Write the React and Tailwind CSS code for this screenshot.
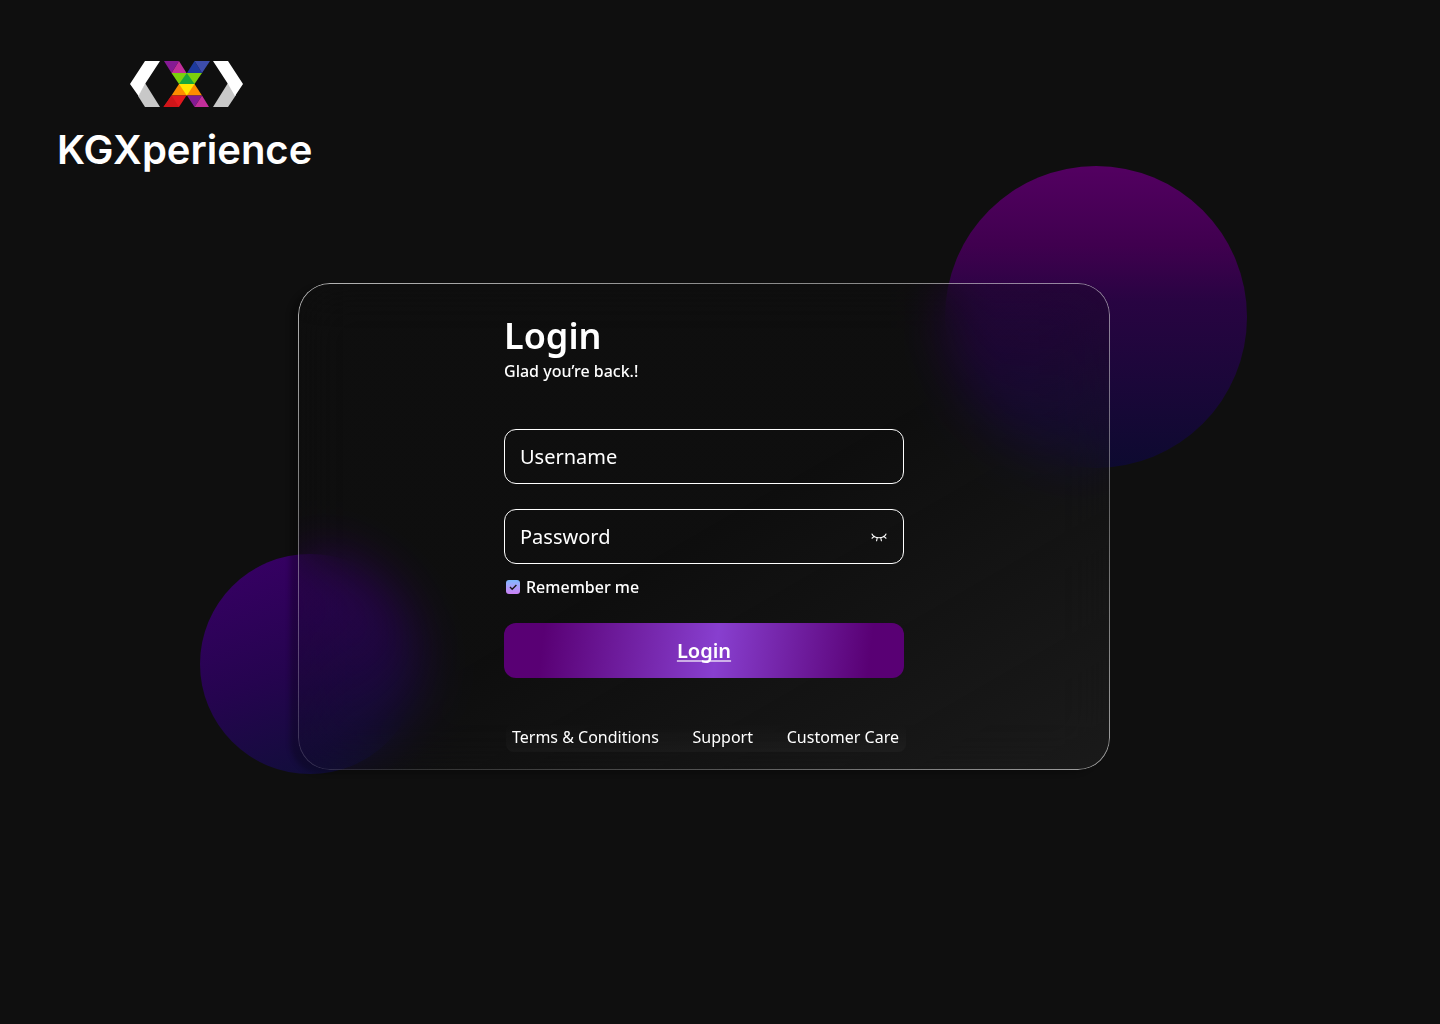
import { useState } from "react";

function Logo() {
  return (
    <svg width="113" height="46" viewBox="0 0 113 46" aria-hidden="true">
      <path d="M15 22L30 46H15L8 35Z" fill="#c8c8c8" />
      <path d="M15 0H30L15 23L8.500 35L0 23Z" fill="#fff" />
      <path d="M98 22L106 34L98 46H83Z" fill="#c8c8c8" />
      <path d="M83 0H98L113 23L105 35L98 23Z" fill="#fff" />
      <path d="M34 0H49L41.500 12Z" fill="#851a94" />
      <path d="M49 0L56.500 12H41.500Z" fill="#c22f9b" />
      <path d="M64.500 0L72 12H57Z" fill="#1d3a9e" />
      <path d="M64.500 0H80L72 12Z" fill="#3c4cab" />
      <path d="M41.500 12H72L64.500 23H49Z" fill="#7bd00d" />
      <path d="M56.800 12L64.500 23H49Z" fill="#17a63a" />
      <path d="M49 23H64.500L72 34.500H41.500Z" fill="#ff8c00" />
      <path d="M49 23H64.500L56.800 34.500Z" fill="#ffe600" />
      <path d="M41.500 34.500H56.500L49 46H33.500Z" fill="#e3191f" />
      <path d="M41.500 34.500L49 46H33.500Z" fill="#cf1519" />
      <path d="M57 34.500H72L64.500 46Z" fill="#851a94" />
      <path d="M72 34.500L79 46H64.500Z" fill="#c22f9b" />
    </svg>
  );
}

function ClosedEye() {
  return (
    <svg width="16" height="10" viewBox="0 0 16 10" fill="none" stroke="#fff" strokeWidth="1.1" strokeLinecap="round" aria-hidden="true">
      <path d="M1 2C3 7 13 7 15 2" />
      <path d="M3.200 4.400L1 6.200M12.800 4.400L15 6.200M6.200 5.800L5.600 8.800M9.800 5.800L10.400 8.800" />
    </svg>
  );
}

const field =
  "block h-[55px] w-full rounded-xl border border-white bg-transparent px-[15px] text-xl text-white placeholder:text-white outline-none focus:ring-1 focus:ring-white";

export default function App() {
  const [remember, setRemember] = useState(true);
  const [visible, setVisible] = useState(false);

  return (
    <div className="flex min-h-screen flex-col overflow-hidden bg-[#0f0f0f] font-['Noto_Sans',sans-serif] text-white">
      <header className="flex flex-col items-start px-[57px] pt-[61px]">
        <div className="flex flex-col items-center">
          <div className="pl-1">
            <Logo />
          </div>
          <span className="mt-[18px] font-['Inter',sans-serif] text-[40px] leading-[50px] font-semibold">KGXperience</span>
        </div>
      </header>

      <main className="flex justify-center pt-[108px] pr-8">
        <div className="relative w-full max-w-[812px]">
          <div className="absolute -top-[117px] -right-[137px] size-[302px] rounded-full bg-[linear-gradient(180deg,#530061_0%,#40004f_26%,#280442_45%,#0d0a30_100%)]" />
          <div className="absolute -bottom-1 -left-[98px] size-[220px] rounded-full bg-[linear-gradient(160deg,#360063_8%,#25044f_50%,#0f0f38_92%)]" />

          <section className="relative flex justify-center rounded-[32px] bg-[linear-gradient(150deg,rgba(12,12,12,0.2)_0%,rgba(12,12,12,0.2)_50%,rgba(38,38,38,0.5)_100%)] px-6 pt-[30px] pb-[18px] shadow-[-8px_4px_5px_rgba(0,0,0,0.24)] backdrop-blur-[26px]">
            <div className="pointer-events-none absolute inset-0 rounded-[32px] bg-[linear-gradient(90deg,transparent_50%,rgba(255,255,255,0.25)_100%),linear-gradient(160deg,rgba(255,255,255,0.7)_0%,rgba(255,255,255,0.12)_65%,rgba(255,255,255,0.45)_100%)] p-px [mask:linear-gradient(#000_0_0)_content-box_exclude,linear-gradient(#000_0_0)]" />

            <form className="w-full max-w-[400px]" onSubmit={(e) => e.preventDefault()}>
              <h1 className="text-4xl leading-[46px] font-semibold">Login</h1>
              <p className="text-base leading-6 font-medium">Glad you’re back.!</p>

              <div className="mt-[46px]">
                <input className={field} type="text" placeholder="Username" aria-label="Username" />
              </div>
              <div className="relative mt-[25px]">
                <input className={field} type={visible ? "text" : "password"} placeholder="Password" aria-label="Password" />
                <button
                  type="button"
                  aria-label="Show password"
                  onClick={() => setVisible(!visible)}
                  className="absolute inset-y-0 right-[17px] flex items-center"
                >
                  <ClosedEye />
                </button>
              </div>

              <label className="mt-[11px] flex items-center gap-1.5 pl-0.5 text-base leading-6 font-medium">
                <span className="grid size-3.5 place-items-center">
                  <input
                    type="checkbox"
                    checked={remember}
                    onChange={(e) => setRemember(e.target.checked)}
                    className="peer col-start-1 row-start-1 size-3.5 appearance-none rounded-[3px] bg-linear-to-b from-[#7cb8ff] to-[#c980f5]"
                  />
                  <svg className="pointer-events-none col-start-1 row-start-1 hidden size-3.5 peer-checked:block" viewBox="0 0 14 14" fill="none" stroke="#191919" strokeWidth="1.4" aria-hidden="true">
                    <path d="M4 7L6.200 9.200L10.400 5" />
                  </svg>
                </span>
                Remember me
              </label>

              <button
                type="submit"
                className="mt-6 block h-[55px] w-full rounded-xl bg-[linear-gradient(97deg,#590074_10%,#883fcf_53%,#590074_91%)] text-xl font-semibold underline decoration-white/60 decoration-2 underline-offset-2 [text-decoration-skip-ink:none]"
              >
                Login
              </button>

              <nav className="mt-[45px] -mr-0.5 ml-0.5 flex justify-between rounded-lg bg-linear-to-b from-transparent to-white/3 pt-0.5 pr-[7px] pb-[3px] pl-1.5 text-base leading-6">
                <a href="#terms">Terms &amp; Conditions</a>
                <a href="#support">Support</a>
                <a href="#care">Customer Care</a>
              </nav>
            </form>
          </section>
        </div>
      </main>
    </div>
  );
}
